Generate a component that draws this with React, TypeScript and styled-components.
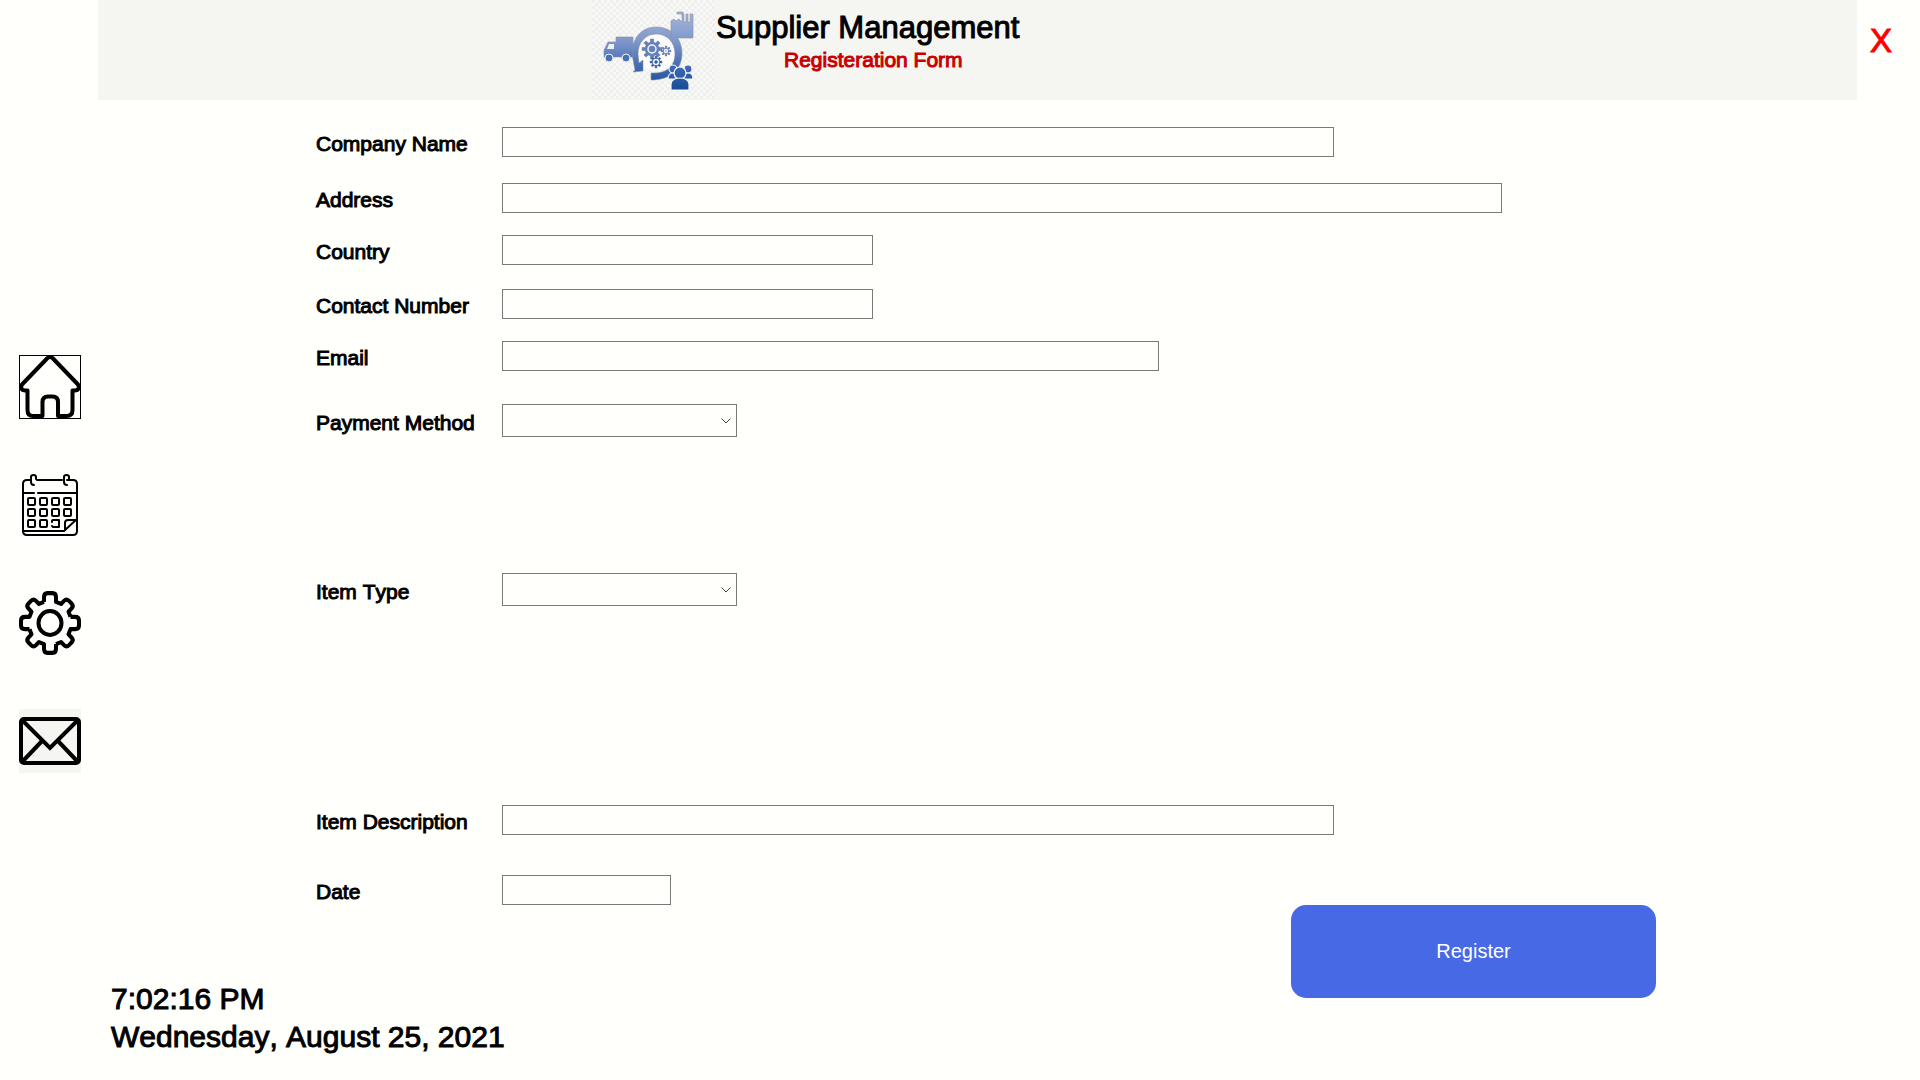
import React from "react";
import styled, { createGlobalStyle } from "styled-components";

const GlobalStyle = createGlobalStyle`
  *, *::before, *::after { box-sizing: border-box; }
  body {
    margin: 0;
    background: #fffffc;
    color: #000;
    font-family: "Liberation Sans", Arial, sans-serif;
    font-kerning: none;
  }
`;

const Page = styled.div`
  display: grid;
  grid-template-columns: 98px minmax(0, 1fr) 63px;
  min-height: 100vh;
`;

const Sidebar = styled.nav`
  display: flex;
  flex-direction: column;
  align-items: flex-start;
  gap: 54px;
  padding: 355px 0 0 19px;
`;

const NavButton = styled.button<{ $framed?: boolean; $shaded?: boolean }>`
  display: block;
  width: 62px;
  height: 64px;
  padding: 0;
  border: 0;
  outline: ${(p) => (p.$framed ? "1px solid #000" : "none")};
  outline-offset: -1px;
  background: ${(p) => (p.$shaded ? "#f5f5f2" : "transparent")};
  cursor: pointer;

  svg {
    display: block;
    width: 62px;
    height: 64px;
  }
`;

const Main = styled.main`
  display: flex;
  flex-direction: column;
`;

const Header = styled.header`
  display: flex;
  height: 100px;
  padding-left: 494px;
  background: #f5f5f2;
`;

const Logo = styled.svg`
  flex: none;
  width: 124px;
  height: 100px;
`;

const Heading = styled.div`
  padding-top: 10px;
`;

const Title = styled.h1`
  margin: 0;
  font-size: 31px;
  line-height: 36px;
  font-weight: 400;
  -webkit-text-stroke: 1px currentColor;
  white-space: nowrap;
`;

const Subtitle = styled.p`
  margin: 0;
  padding-left: 68px;
  color: #c80000;
  font-size: 21px;
  line-height: 28px;
  -webkit-text-stroke: 1px currentColor;
  white-space: nowrap;
`;

const Form = styled.form`
  display: flex;
  flex-direction: column;
  padding-top: 27px;
`;

const Row = styled.div<{ $space?: number }>`
  display: grid;
  grid-template-columns: 186px minmax(0, 1fr);
  align-items: center;
  margin-top: ${(p) => p.$space ?? 0}px;
  padding-left: 218px;
`;

const Label = styled.label`
  padding-top: 4px;
  font-size: 21px;
  line-height: 24px;
  -webkit-text-stroke: 1px currentColor;
  white-space: nowrap;
`;

const TextField = styled.input<{ $width: number }>`
  width: ${(p) => p.$width}px;
  max-width: 100%;
  height: 30px;
  padding: 0 6px;
  border: 1px solid #7a7a7a;
  border-radius: 0;
  background: #fffffc;
  font: inherit;
  font-size: 20px;
`;

const SelectBox = styled.div`
  display: grid;
  align-items: center;
  width: 235px;
  max-width: 100%;

  > * {
    grid-area: 1 / 1;
  }
`;

const Select = styled.select`
  appearance: none;
  width: 100%;
  height: 33px;
  padding: 0 24px 0 6px;
  border: 1px solid #7a7a7a;
  border-radius: 0;
  background: #fffffc;
  font: inherit;
  font-size: 20px;
`;

const Chevron = styled.svg`
  justify-self: end;
  width: 10px;
  height: 6px;
  margin-right: 6px;
  pointer-events: none;
`;

const Bottom = styled.div`
  display: flex;
  justify-content: space-between;
  align-items: flex-start;
  padding: 0 201px 0 13px;
`;

const Clock = styled.div`
  padding-top: 75px;
  font-size: 30px;
  line-height: 38px;
  -webkit-text-stroke: 1px currentColor;
`;

const ClockLine = styled.time`
  display: block;
`;

const RegisterButton = styled.button`
  width: 365px;
  height: 93px;
  border: 0;
  border-radius: 15px;
  background: #4769e6;
  color: #fff;
  font-family: inherit;
  font-size: 20px;
  cursor: pointer;
`;

const CloseButton = styled.button`
  justify-self: start;
  align-self: start;
  margin: 21px 0 0 13px;
  padding: 0;
  border: 0;
  background: none;
  color: #f00;
  font-family: inherit;
  font-size: 33px;
  line-height: 40px;
  -webkit-text-stroke: 1px currentColor;
  cursor: pointer;
`;

/** Outline of a cog: each tooth is given by its outer and inner half angles. */
function cogPath(cx: number, cy: number, outer: number, inner: number, teeth = 8) {
  const step = (Math.PI * 2) / teeth;
  const points: string[] = [];
  for (let i = 0; i < teeth; i++) {
    const a = i * step - Math.PI / 2;
    [
      [inner, -0.29],
      [outer, -0.2],
      [outer, 0.2],
      [inner, 0.29],
    ].forEach(([r, k]) => {
      const t = a + k * step;
      points.push(`${(cx + r * Math.cos(t)).toFixed(2)} ${(cy + r * Math.sin(t)).toFixed(2)}`);
    });
  }
  return `M${points.join("L")}Z`;
}

const HomeIcon = () => (
  <svg viewBox="0 0 62 64" fill="none" stroke="#000" strokeWidth="4" strokeLinejoin="round" strokeLinecap="round" aria-hidden="true">
    <path d="M28.500 3Q31 1 33.500 3L59 29.500Q61.500 35 56 35.500H53.500V55Q53.500 61 47.500 61H39V47Q39 41.500 33.500 41.500H29Q23.500 41.500 23.500 47V61H14Q8.500 61 8.500 55V35.500H6Q0.500 35 3 29.500Z" />
  </svg>
);

const CalendarIcon = () => (
  <svg viewBox="0 0 62 64" fill="none" stroke="#000" strokeWidth="2" strokeLinejoin="round" strokeLinecap="round" aria-hidden="true">
    <path d="M12 7H8Q4 7 4 11V58Q4 62 8 62H54Q58 62 58 58V11Q58 7 54 7H48M18 7H43" />
    <path d="M15 12Q12 12 12 9V4Q12 2 14.500 2T17 4V6M48 12Q45 12 45 9V4Q45 2 47.500 2T50 4V6" />
    <path d="M4 20H15M19 20H57M5 58H45L58 46M46 57V50Q46 47 49 47H57" />
    {[25, 36, 47].map((y) =>
      [9, 21, 33, 45].map((x) =>
        y === 47 && x === 45 ? null : y === 47 && x === 33 ? (
          <path key={`${x}-${y}`} d="M33 49V48Q33 47 34 47H40V54H34L33 53" />
        ) : (
          <rect key={`${x}-${y}`} x={x} y={y} width="7" height="7" rx="1" />
        )
      )
    )}
  </svg>
);

const GearIcon = () => (
  <svg viewBox="0 0 62 64" fill="none" stroke="#000" strokeWidth="4" strokeLinejoin="round" aria-hidden="true">
    {[0, 90, 180, 270].map((a) => (
      <path
        key={a}
        transform={`translate(31 32) scale(1 1.03) rotate(${a})`}
        d="M-6 -20.500V-25Q-6 -29 -2.500 -29H2.500Q6 -29 6 -25V-20.500L11 -18.500L14 -21.500Q16.500 -24 19 -21.500L21.500 -19Q24 -16.500 21.500 -14L18.500 -11L20.500 -6"
      />
    ))}
    <ellipse cx="31" cy="32" rx="11.500" ry="12" />
  </svg>
);

const MailIcon = () => (
  <svg viewBox="0 0 62 64" fill="none" stroke="#000" strokeWidth="4" strokeLinejoin="miter" aria-hidden="true">
    <rect x="2" y="10" width="58" height="44" rx="3" />
    <path d="M3 11L31 39L59 11M3 53L23 32M59 53L39 32" />
  </svg>
);

const LogoArt = () => (
  <Logo viewBox="0 0 124 100" role="img" aria-label="Supplier Management logo">
    <defs>
      <linearGradient id="tone" gradientUnits="userSpaceOnUse" x1="0" y1="10" x2="0" y2="90">
        <stop offset="0" stopColor="#a9b9da" />
        <stop offset="0.4" stopColor="#7c96cb" />
        <stop offset="0.7" stopColor="#426bb3" />
        <stop offset="1" stopColor="#164a97" />
      </linearGradient>
      <pattern id="checks" width="6" height="6" patternUnits="userSpaceOnUse">
        <rect width="6" height="6" fill="#f8f8f6" />
        <path d="M0 0H3V3H0ZM3 3H6V6H3Z" fill="#efefed" />
      </pattern>
    </defs>
    <rect width="124" height="100" fill="url(#checks)" />
    <circle cx="64" cy="52" r="19" fill="#fcfcfb" />
    <g fill="url(#tone)" stroke="#8b919e" strokeWidth="0.6">
      <path d="M40 54C40 38 50 27 64 27C80 27 90 39 90 53C90 70 78 80 59 80V73C75 74 83 66 83 54C83 42 75 34 64 34C53 34 46 43 46 54L47 63L51 60V71L41 72L43 70Z" />
      <path d="M24 37H41V57H38A4 4 0 0 1 30 57H21A4 4 0 0 1 13 57H12V50L16 42H24Z" />
      <path d="M79 21L82 19L84 21L87 19L90 22V14H92V22H94V14H96V22H98V14H101V38H79ZM85 12H91V14H85Z" />
    </g>
    <path d="M17 44H22V49H15Z" fill="#eef1f6" />
    <g fill="#4a70b5" stroke="#f5f5f3" strokeWidth="1">
      <circle cx="17" cy="58" r="4" />
      <circle cx="34" cy="58" r="4" />
    </g>
    <g fill="#6482bd" stroke="#566a94" strokeWidth="0.5">
      <path d={cogPath(60, 49, 10, 7)} />
      <path d={cogPath(74, 51, 5, 3)} />
      <path d={cogPath(64, 62, 6, 4)} fill="#2d5ba7" />
    </g>
    <g fill="none" stroke="#f4f5f7" strokeWidth="1.500">
      <circle cx="60" cy="49" r="4" />
      <circle cx="74" cy="51" r="1.500" />
      <circle cx="64" cy="62" r="2.500" />
    </g>
    <circle cx="60" cy="49" r="1.500" fill="#6482bd" />
    <g fill="url(#tone)" stroke="#f5f5f3" strokeWidth="1.200">
      <circle cx="81" cy="69" r="4" />
      <circle cx="96" cy="69" r="4" />
      <path d="M76 79Q76 73 81 73Q86 73 86 79ZM91 79Q91 73 96 73Q101 73 101 79Z" />
      <circle cx="88" cy="73" r="6" />
      <path d="M79 90V84Q80 78 88 78Q96 78 97 84V90Z" />
    </g>
  </Logo>
);

const Dropdown = ({ id }: { id: string }) => (
  <SelectBox>
    <Select id={id} name={id} />
    <Chevron viewBox="0 0 10 6" fill="none" stroke="#444" aria-hidden="true">
      <path d="M0.500 0.500L5 5L9.500 0.500" />
    </Chevron>
  </SelectBox>
);

type Field = { id: string; label: string; space?: number; width?: number };

const fields: Field[] = [
  { id: "company", label: "Company Name", width: 832 },
  { id: "address", label: "Address", space: 26, width: 1000 },
  { id: "country", label: "Country", space: 22, width: 371 },
  { id: "contact", label: "Contact Number", space: 24, width: 371 },
  { id: "email", label: "Email", space: 22, width: 657 },
  { id: "payment", label: "Payment Method", space: 33 },
  { id: "item-type", label: "Item Type", space: 136 },
  { id: "description", label: "Item Description", space: 199, width: 832 },
  { id: "date", label: "Date", space: 40, width: 169 },
];

export default function App() {
  return (
    <Page>
      <GlobalStyle />
      <Sidebar aria-label="Main">
        <NavButton type="button" aria-label="Home" $framed>
          <HomeIcon />
        </NavButton>
        <NavButton type="button" aria-label="Calendar">
          <CalendarIcon />
        </NavButton>
        <NavButton type="button" aria-label="Settings">
          <GearIcon />
        </NavButton>
        <NavButton type="button" aria-label="Mail" $shaded>
          <MailIcon />
        </NavButton>
      </Sidebar>
      <Main>
        <Header>
          <LogoArt />
          <Heading>
            <Title>Supplier Management</Title>
            <Subtitle>Registeration Form</Subtitle>
          </Heading>
        </Header>
        <Form onSubmit={(e) => e.preventDefault()}>
          {fields.map((f) => (
            <Row key={f.id} $space={f.space}>
              <Label htmlFor={f.id}>{f.label}</Label>
              {f.width ? <TextField id={f.id} name={f.id} type="text" $width={f.width} /> : <Dropdown id={f.id} />}
            </Row>
          ))}
          <Bottom>
            <Clock>
              <ClockLine dateTime="19:02:16">7:02:16 PM</ClockLine>
              <ClockLine dateTime="2021-08-25">Wednesday, August 25, 2021</ClockLine>
            </Clock>
            <RegisterButton type="submit">Register</RegisterButton>
          </Bottom>
        </Form>
      </Main>
      <CloseButton type="button" aria-label="Close">
        X
      </CloseButton>
    </Page>
  );
}
